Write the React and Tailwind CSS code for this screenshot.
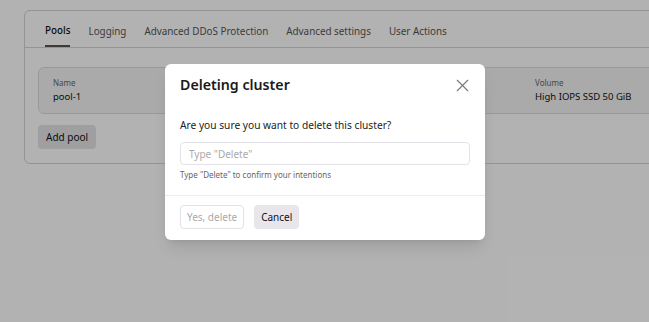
import { X } from 'lucide-react'

const tabs = ['Pools', 'Logging', 'Advanced DDoS Protection', 'Advanced settings', 'User Actions']

export default function App() {
  return (
    <div className="relative w-[649px] h-[322px] overflow-hidden bg-white" style={{ fontFamily: '"Noto Sans", "Open Sans", sans-serif' }}>
      <div className="pt-[10px] pl-[24px]">
        <div className="w-[680px] rounded-[6px] border border-[#d4d4d8] pb-[14px]">
          <div className="flex gap-[18px] px-[20px] border-b border-[#d4d4d8] h-[37px]">
            {tabs.map((t, i) => (
              <div
                key={t}
                className={`flex items-center text-[9.85px] h-full pt-[5px] ${i === 0 ? 'text-[#111] font-medium border-b-2 border-[#555]' : 'text-[#555]'}`}
              >
                {t}
              </div>
            ))}
          </div>
          <div className="px-[13px] pt-[19px]">
            <div className="flex h-[47px] rounded-[6px] border border-[#dcdcdf] bg-[#f4f4f5] px-[14px] items-center">
              <div className="w-[482px]">
                <div className="text-[8px] text-[#666] leading-[12px]">Name</div>
                <div className="text-[9.5px] text-[#111] leading-[15px]">pool-1</div>
              </div>
              <div>
                <div className="text-[8px] text-[#666] leading-[12px]">Volume</div>
                <div className="text-[9.5px] text-[#111] leading-[15px]">High IOPS SSD 50 GiB</div>
              </div>
            </div>
            <button className="mt-[11px] h-[24px] px-[8px] rounded-[4px] bg-[#e4e4e7] text-[10px] text-[#111]">Add pool</button>
          </div>
        </div>
      </div>

      <div className="absolute inset-0 bg-black/30" />

      <div className="absolute left-[165px] top-[64px] w-[320px] rounded-[6px] bg-white shadow-lg">
        <div className="flex items-center justify-between pl-[15px] pr-[12px] h-[42px]">
          <h2 className="text-[14.2px] font-semibold text-[#1a1a1a]">Deleting cluster</h2>
          <X size={21} strokeWidth={1.3} className="text-[#777]" />
        </div>
        <div className="px-[15px] pt-[12px] pb-[14px] border-b border-[#ececef]">
          <p className="text-[10.2px] text-[#222] leading-[15px]">Are you sure you want to delete this cluster?</p>
          <input
            className="mt-[9px] w-full h-[23px] rounded-[4px] border border-[#e2e2e8] px-[8px] text-[10px] outline-none placeholder:text-[#aaa]"
            placeholder='Type "Delete"'
          />
          <p className="mt-[4px] text-[8px] text-[#666] leading-[12px]">Type "Delete" to confirm your intentions</p>
        </div>
        <div className="flex gap-[10px] px-[15px] pt-[9px] pb-[11px]">
          <button className="h-[24px] px-[6px] rounded-[4px] border border-[#e2e2e8] text-[10px] text-[#aaa]">Yes, delete</button>
          <button className="h-[24px] px-[7px] rounded-[4px] bg-[#e8e6eb] text-[10px] text-[#111]">Cancel</button>
        </div>
      </div>
    </div>
  )
}
